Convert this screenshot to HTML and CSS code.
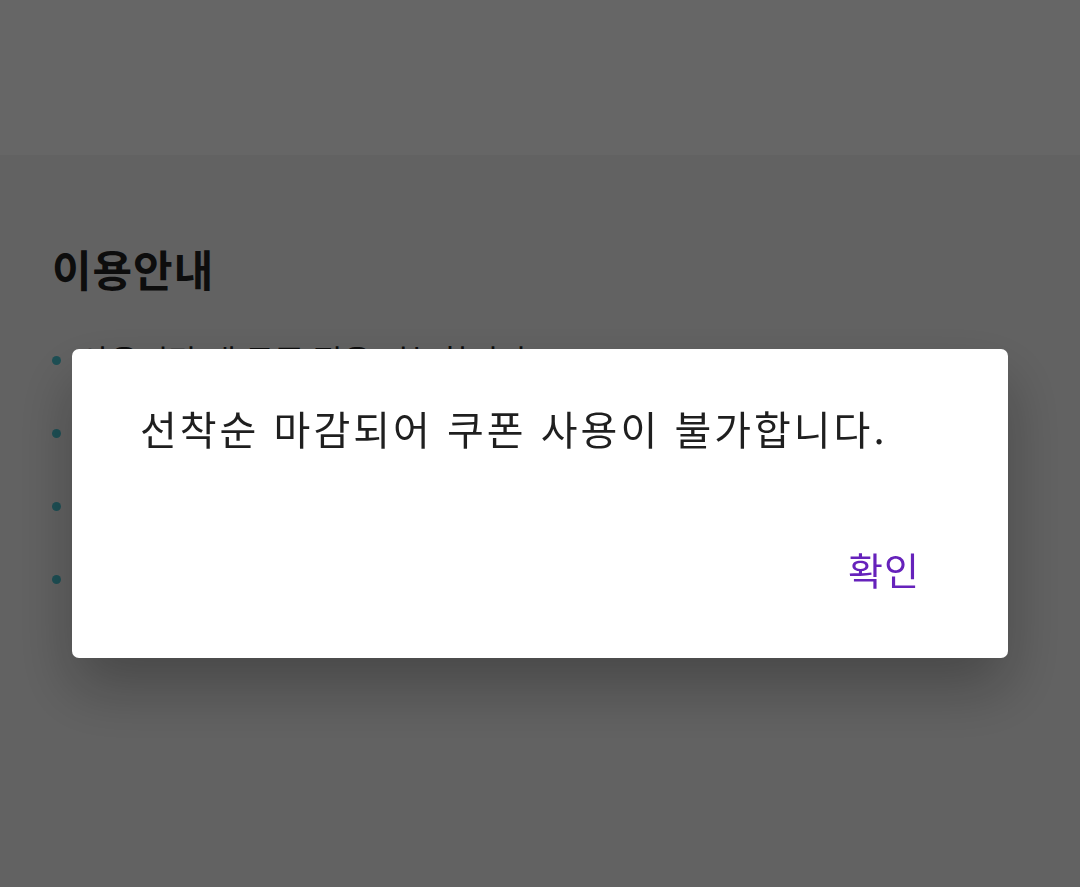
FILE: index.html
```html
<!DOCTYPE html>
<html lang="ko">

<head>
    <meta charset="UTF-8">
    <meta name="viewport" content="width=device-width, initial-scale=1.0">
    <title>쿠폰 이용안내</title>
    <link rel="stylesheet" href="styles.css">
</head>

<body>
    <div class="topbar"></div>
    <div class="content">
        <h2 class="guide-title">이용안내</h2>
        <ul class="guide-list">
            <li>사용기간 내 쿠폰 적용 가능합니다.</li>
            <li>선착순 쿠폰은 수량이 소진되면 조기 마감됩니다.</li>
            <li>다른 쿠폰과 중복 사용이 불가합니다.</li>
            <li>주문 취소 시 쿠폰은 반환되지 않습니다.</li>
        </ul>
    </div>

    <!-- Alert dialog -->
    <div class="dim">
        <div class="dialog">
            <p class="dialog-message">선착순 마감되어 쿠폰 사용이 불가합니다.</p>
            <div class="dialog-actions">
                <button class="dialog-btn">확인</button>
            </div>
        </div>
    </div>
</body>

</html>
```

FILE: styles.css
```css
body {
    margin: 0;
    background-color: #f5f5f5;
    font-family: "Noto Sans CJK KR", "Noto Sans", sans-serif;
    color: #222;
    height: 100vh;
    overflow: hidden;
}

.topbar {
    height: 155px;
    background-color: #fff;
}

.content {
    padding: 86px 52px 0;
}

.guide-title {
    margin: 0;
    font-size: 43px;
    font-weight: 700;
    letter-spacing: 1px;
    line-height: 54px;
}

.guide-list {
    list-style: none;
    margin: 28px 0 0;
    padding: 0;
}

.guide-list li {
    position: relative;
    padding-left: 28px;
    font-size: 32px;
    line-height: 73px;
    white-space: nowrap;
}

.guide-list li::before {
    content: "";
    position: absolute;
    left: 0;
    top: 33px;
    width: 9px;
    height: 9px;
    border-radius: 50%;
    background-color: #4bc6d4;
}

/* Dimmed layer + dialog */
.dim {
    position: fixed;
    inset: 0;
    background-color: rgba(0, 0, 0, 0.6);
    display: flex;
    justify-content: center;
    align-items: flex-start;
    padding-top: 349px;
}

.dialog {
    width: 936px;
    height: 309px;
    box-sizing: border-box;
    background-color: #fff;
    border-radius: 7px;
    box-shadow: 0 30px 60px rgba(0, 0, 0, 0.28);
    padding: 50px 88px 0 68px;
    display: flex;
    flex-direction: column;
}

.dialog-message {
    margin: 0;
    font-size: 40px;
    letter-spacing: 3px;
    line-height: 58px;
    color: #1f1f1f;
    white-space: nowrap;
}

.dialog-actions {
    display: flex;
    justify-content: flex-end;
    margin-top: 87px;
}

.dialog-btn {
    border: none;
    background: none;
    padding: 0;
    font-family: inherit;
    font-size: 38px;
    letter-spacing: 1px;
    line-height: 50px;
    color: #6622bb;
    cursor: pointer;
}
```
